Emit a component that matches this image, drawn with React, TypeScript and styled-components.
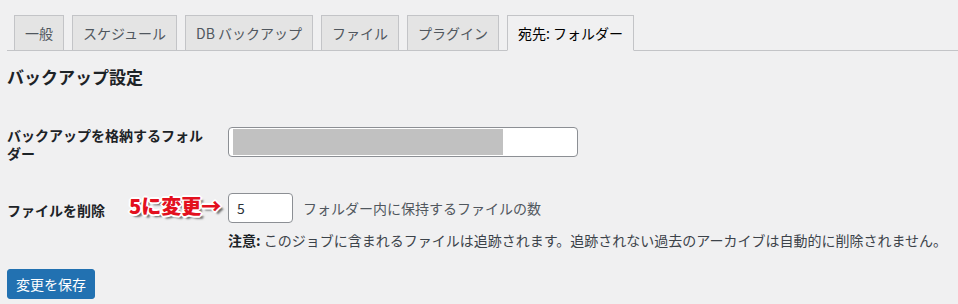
import { FunctionComponent } from 'react'
import styled, { createGlobalStyle } from 'styled-components'

const GlobalStyle = createGlobalStyle`
    body {
        margin: 0;
        background: #f0f0f1;
        color: #1d2327;
        font-family: "Noto Sans CJK JP", "Noto Sans", sans-serif;
        font-size: 14px;
    }
`

const Page = styled.div`
    width: 958px;
    height: 304px;
    box-sizing: border-box;
    padding-left: 7px;
    overflow: hidden;
`

const NavWrap = styled.div`
    display: flex;
    gap: 8px;
    padding: 15px 0 0 7px;
    border-bottom: 1px solid #c3c4c7;
`

const Tab = styled.div<{ $active?: boolean }>`
    margin-bottom: -1px;
    padding: 5px 10px;
    line-height: 24px;
    font-size: 14px;
    white-space: nowrap;
    border: 1px solid #c3c4c7;
    border-bottom-color: ${({ $active }) => ($active ? '#f0f0f1' : '#c3c4c7')};
    background: ${({ $active }) => ($active ? '#f0f0f1' : '#e4e4e4')};
    color: ${({ $active }) => ($active ? '#000' : '#50575e')};
`

const Heading = styled.h2`
    margin: 14px 0 0;
    font-size: 17px;
    line-height: 24px;
    font-weight: 700;
    color: #1d2327;
`

const Row = styled.div<{ $gap: number }>`
    display: grid;
    grid-template-columns: 221px 1fr;
    margin-top: ${({ $gap }) => $gap}px;
`

const Label = styled.div<{ $top?: number }>`
    position: relative;
    width: 200px;
    padding-top: ${({ $top }) => $top || 0}px;
    font-size: 14px;
    line-height: 18px;
    font-weight: 700;
    color: #1d2327;
`

const Callout = styled.span`
    position: absolute;
    left: 122px;
    top: 1px;
    font-size: 20px;
    line-height: 24px;
    font-weight: 900;
    color: #e3101e;
    white-space: nowrap;
    text-shadow:
        1px 1px 0 #fff, -1px -1px 0 #fff, 1px -1px 0 #fff, -1px 1px 0 #fff,
        2px 0 0 #fff, -2px 0 0 #fff, 0 2px 0 #fff, 0 -2px 0 #fff,
        3px 3px 2px rgba(0, 0, 0, 0.55);
`

const TextBox = styled.div`
    display: flex;
    margin-top: 1px;
    width: 350px;
    height: 30px;
    box-sizing: border-box;
    padding: 1px 4px;
    background: #fff;
    border: 1px solid #8c8f94;
    border-radius: 4px;
`

const Redacted = styled.div`
    width: 270px;
    background: #c1c1c1;
`

const Field = styled.div`
    display: flex;
    align-items: center;
    gap: 10px;
`

const NumberInput = styled.input`
    width: 65px;
    height: 30px;
    box-sizing: border-box;
    margin: 0;
    padding: 0 8px;
    font-family: inherit;
    font-size: 14px;
    color: #2c3338;
    background: #fff;
    border: 1px solid #8c8f94;
    border-radius: 4px;
    outline: none;
`

const Desc = styled.span`
    line-height: 18px;
    color: #50575e;
`

const Note = styled.div`
    margin-top: 8px;
    line-height: 18px;
    color: #3c434a;
    white-space: nowrap;

    b {
        color: #1d2327;
        font-weight: 700;
    }
`

const SaveButton = styled.button`
    display: block;
    margin-top: 20px;
    height: 30px;
    padding: 0 8px;
    font-family: inherit;
    font-size: 14px;
    line-height: 28px;
    color: #fff;
    background: #2271b1;
    border: 1px solid #2271b1;
    border-radius: 3px;
`

const tabs = ['一般', 'スケジュール', 'DB バックアップ', 'ファイル', 'プラグイン', '宛先: フォルダー']

const App: FunctionComponent = () => {
    return (
        <Page>
            <GlobalStyle />
            <NavWrap>
                {tabs.map((t, i) => (
                    <Tab key={t} $active={i === tabs.length - 1}>{t}</Tab>
                ))}
            </NavWrap>
            <Heading>バックアップ設定</Heading>
            <Row $gap={37}>
                <Label>バックアップを格納するフォルダー</Label>
                <TextBox>
                    <Redacted />
                </TextBox>
            </Row>
            <Row $gap={31}>
                <Label $top={8}>
                    ファイルを削除
                    <Callout>5に変更→</Callout>
                </Label>
                <div>
                    <Field>
                        <NumberInput type="text" defaultValue="5" readOnly />
                        <Desc>フォルダー内に保持するファイルの数</Desc>
                    </Field>
                    <Note>
                        <b>注意:</b> このジョブに含まれるファイルは追跡されます。追跡されない過去のアーカイブは自動的に削除されません。
                    </Note>
                </div>
            </Row>
            <SaveButton>変更を保存</SaveButton>
        </Page>
    )
}

export default App
